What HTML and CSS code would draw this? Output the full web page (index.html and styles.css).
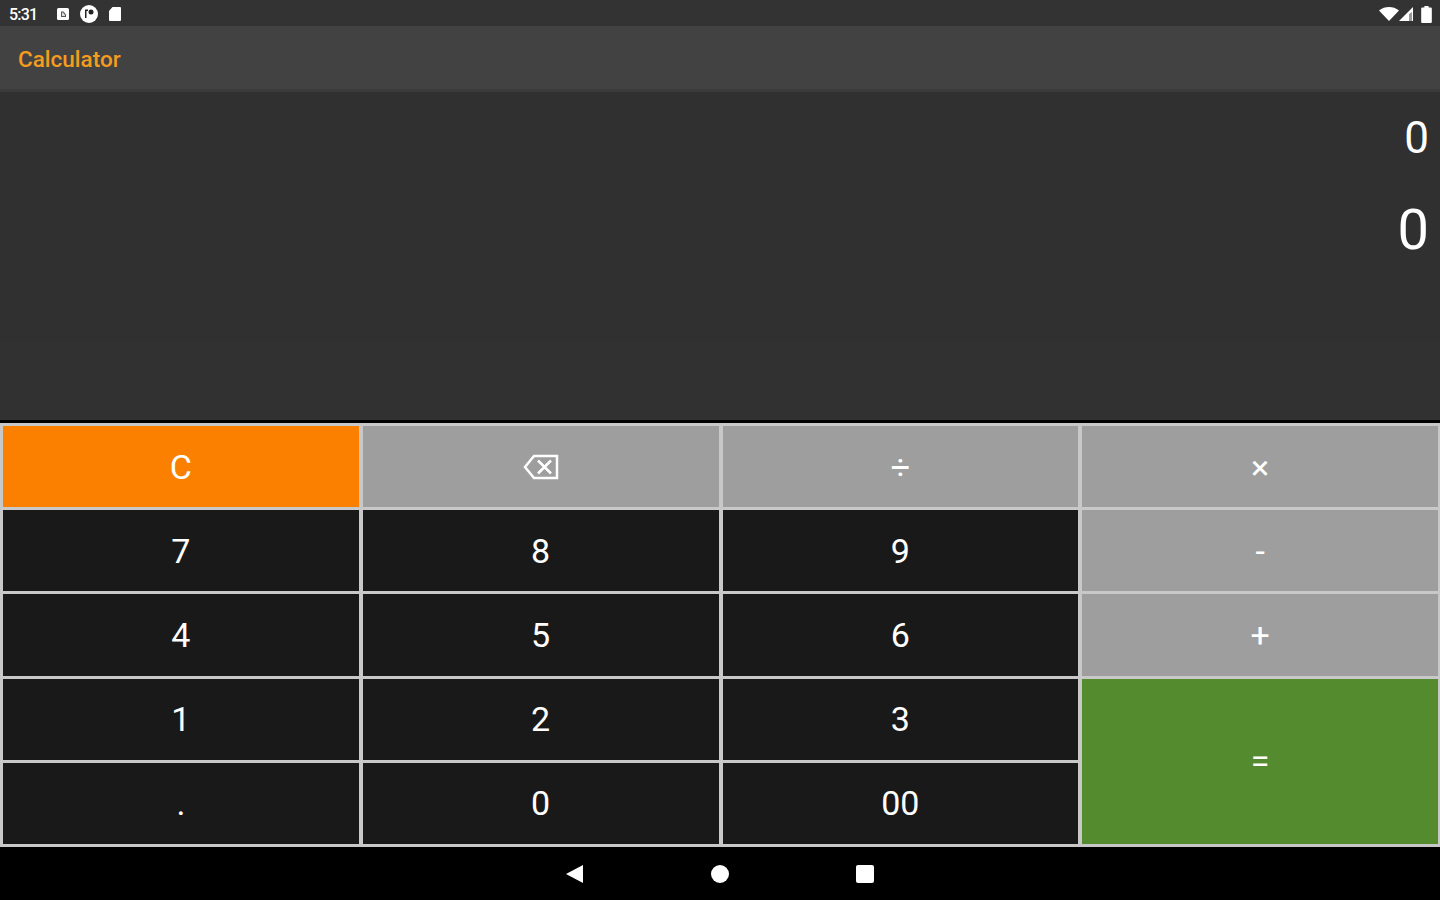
FILE: index.html
```html
<!DOCTYPE html>
<html lang="en">
<head>
  <meta charset="UTF-8">
  <title>Calculator</title>
  <link rel="stylesheet" href="styles.css">
</head>
<body>
<div class="app">
  <div class="statusbar">
    <span class="time">5:31</span>
    <svg class="st-icon" width="14" height="14" viewBox="0 0 14 14"><rect x="1" y="1" width="12" height="12" rx="1.5" fill="#fff"/><path d="M5 4.500h2.500L10 7.500V10H5z" fill="#555"/><path d="M6 5.500h1l2 2.500V9H6z" fill="#ddd"/></svg>
    <svg class="st-icon" width="20" height="20" viewBox="0 0 20 20"><circle cx="10" cy="10" r="9" fill="#fff"/><path d="M6 5.500h3v1.500H7.500v7H6z" fill="#222"/><circle cx="12" cy="8" r="2.500" fill="#222"/></svg>
    <svg class="st-icon" width="14" height="16" viewBox="0 0 14 16"><path d="M4.500 1H12a1 1 0 0 1 1 1v12a1 1 0 0 1-1 1H2a1 1 0 0 1-1-1V5z" fill="#fff"/></svg>
    <span class="spacer"></span>
    <svg width="20" height="14" viewBox="0 0 20 14"><path d="M0 3.500C3 1 6.500 0 10 0s7 1 10 3.500L10 14z" fill="#fff"/></svg>
    <svg class="signal" width="14" height="14" viewBox="0 0 14 14"><path d="M14 0v14H0z" fill="#fff"/><path d="M10 7v7h3V5z" fill="#999"/></svg>
    <svg width="11" height="17" viewBox="0 0 10 16"><path d="M3 0h4v1.500h2a1 1 0 0 1 1 1V15a1 1 0 0 1-1 1H1a1 1 0 0 1-1-1V2.500a1 1 0 0 1 1-1h2z" fill="#fff"/></svg>
  </div>

  <div class="toolbar">Calculator</div>

  <div class="display">
    <div class="output">
      <div class="expr">0</div>
      <div class="result">0</div>
    </div>
    <div class="display-rest"></div>
  </div>

  <div class="keypad">
    <button class="key clear">C</button>
    <button class="key op">
      <svg width="36" height="26" viewBox="0 0 36 26" fill="none" stroke="#fff" stroke-width="2.500"><path d="M34 2H11L2 13l9 11h23z"/><path d="M15 6.500l13 13M28 6.500l-13 13"/></svg>
    </button>
    <button class="key op">÷</button>
    <button class="key op">×</button>

    <button class="key">7</button>
    <button class="key">8</button>
    <button class="key">9</button>
    <button class="key op">-</button>

    <button class="key">4</button>
    <button class="key">5</button>
    <button class="key">6</button>
    <button class="key op">+</button>

    <button class="key">1</button>
    <button class="key">2</button>
    <button class="key">3</button>
    <button class="key equals">=</button>

    <button class="key">.</button>
    <button class="key">0</button>
    <button class="key">00</button>
  </div>

  <div class="navbar">
    <svg width="20" height="20" viewBox="0 0 20 20"><path d="M18 1v18L1 10z" fill="#fff"/></svg>
    <svg width="20" height="20" viewBox="0 0 20 20"><circle cx="10" cy="10" r="9" fill="#fff"/></svg>
    <svg width="20" height="20" viewBox="0 0 20 20"><rect x="1" y="1" width="18" height="18" rx="2" fill="#fff"/></svg>
  </div>
</div>
</body>
</html>
```

FILE: styles.css
```css
* {
  box-sizing: border-box;
}
html, body {
  margin: 0;
  height: 100%;
}
body {
  font-family: Roboto, "Liberation Sans", sans-serif;
  background-color: #000;
  overflow: hidden;
}
.app {
  width: 1440px;
  height: 900px;
  display: flex;
  flex-direction: column;
}
.statusbar {
  height: 26px;
  background-color: #333;
  color: #fff;
  display: flex;
  align-items: center;
  padding: 2px 8px 0 9px;
  gap: 3px;
}
.time {
  font-size: 16px;
  font-weight: 500;
  letter-spacing: -0.8px;
  width: 44px;
}
.st-icon {
  margin-right: 6px;
}
.spacer {
  flex: 1;
}
.signal {
  margin: 0 5px 0 -3px;
}
.toolbar {
  height: 66px;
  background-color: #424242;
  color: #f39c1f;
  font-size: 22.500px;
  font-weight: 500;
  display: flex;
  align-items: center;
  padding: 3px 0 0 18px;
  border-bottom: 3px solid #3a3a3a;
}
.display {
  height: 328px;
  background-color: #303030;
  color: #fff;
  text-align: right;
  display: flex;
  flex-direction: column;
}
.output {
  height: 250px;
  padding: 20px 11px 0 0;
}
.display-rest {
  flex: 1;
  background-color: #313131;
}
.expr {
  font-size: 44px;
  line-height: 52px;
}
.result {
  font-size: 56px;
  line-height: 66px;
  margin-top: 33px;
}
.keypad {
  height: 427px;
  display: grid;
  grid-template-columns: repeat(4, 1fr);
  grid-template-rows: repeat(5, 1fr);
  gap: 3px 4px;
  padding: 3px 2px 3px 3px;
  background-color: #c8c8c8;
  border-top: 3px solid #000;
}
.key {
  border: none;
  padding: 0;
  font-family: inherit;
  font-size: 34px;
  background-color: #191919;
  color: #fff;
  display: flex;
  align-items: center;
  justify-content: center;
}
.op {
  background-color: #9e9e9e;
}
.clear {
  background-color: #fb8000;
}
.equals {
  background-color: #558b2f;
  grid-column: 4;
  grid-row: 4 / span 2;
}
.navbar {
  flex: 1;
  background-color: #000;
  display: flex;
  align-items: center;
  justify-content: center;
  gap: 125px;
}
```
